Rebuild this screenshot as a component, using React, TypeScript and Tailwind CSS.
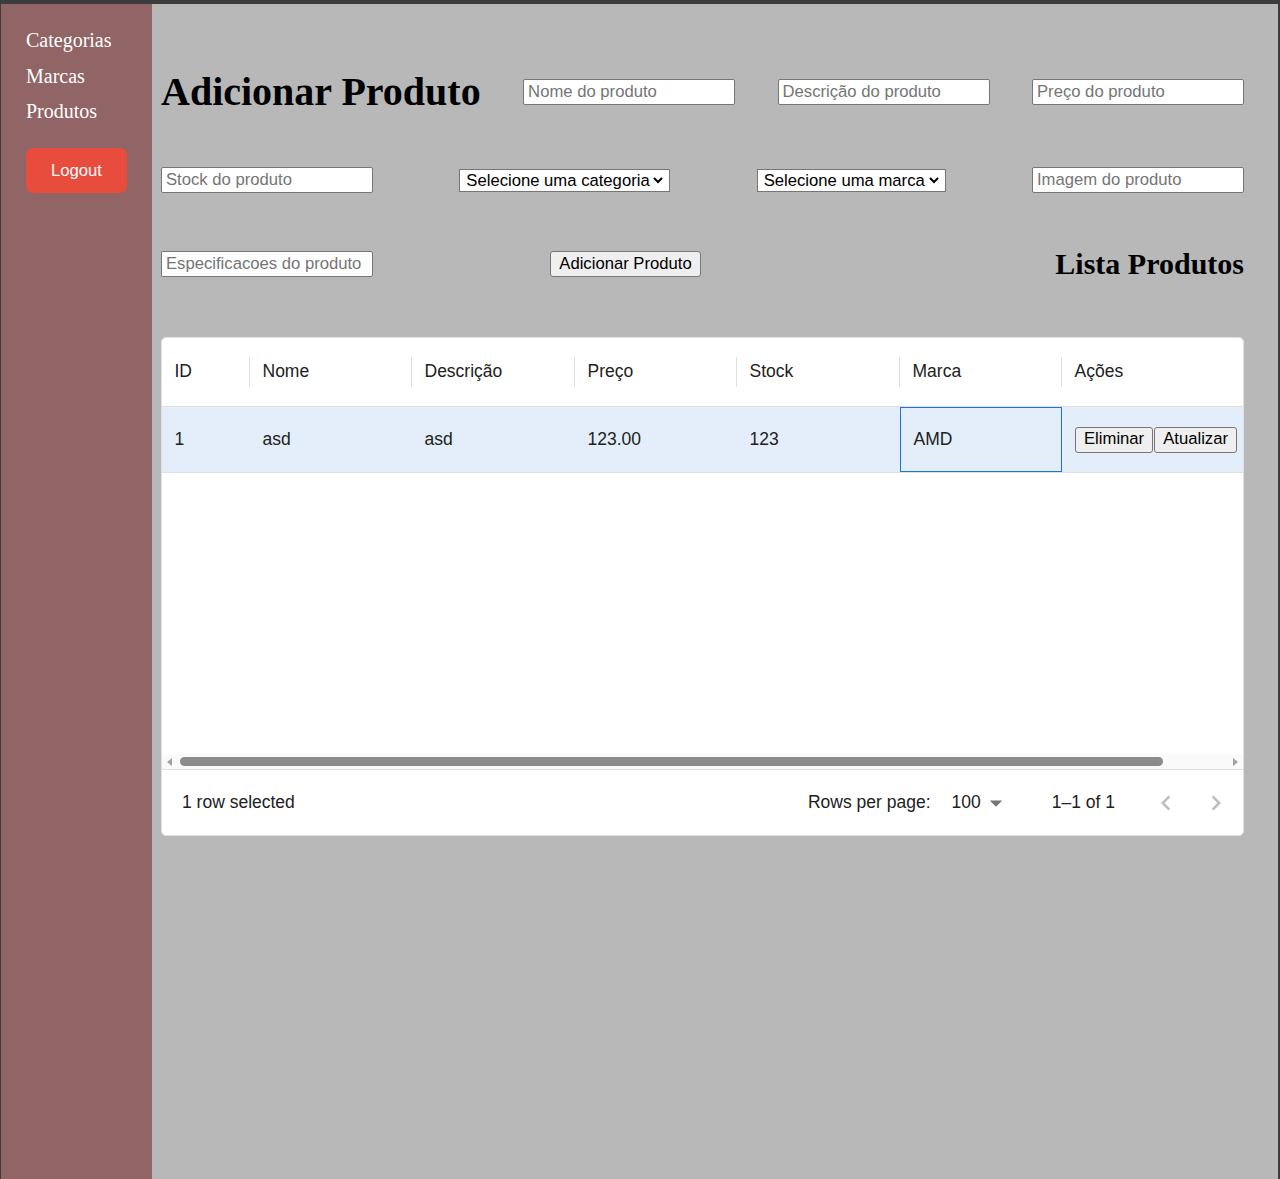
import React from "react";

const sans = { fontFamily: '"Liberation Sans", Arial, sans-serif' };
const serif = { fontFamily: '"Liberation Serif", "Times New Roman", serif' };

const columns = [
  { label: "ID", width: 88 },
  { label: "Nome", width: 162 },
  { label: "Descrição", width: 163 },
  { label: "Preço", width: 162 },
  { label: "Stock", width: 163 },
  { label: "Marca", width: 162 },
  { label: "Ações", width: 275 },
];

function TextInput({ placeholder }: { placeholder: string }) {
  return (
    <input
      placeholder={placeholder}
      className="w-[212px] h-[26px] px-[4px] bg-white border border-[#767676] rounded-[2px] text-[16.67px] text-black placeholder:text-[#757575] outline-none"
      style={sans}
    />
  );
}

function FakeSelect({ label, width }: { label: string; width: number }) {
  return (
    <div
      className="h-[23px] flex items-center justify-between pl-[6px] pr-[5px] bg-white border border-[#767676] text-[16.67px] text-black"
      style={{ ...sans, width }}
    >
      <span>{label}</span>
      <svg width="12" height="12" viewBox="0 0 12 12">
        <path d="M2 4 L6 8 L10 4" fill="none" stroke="#000" strokeWidth="2" />
      </svg>
    </div>
  );
}

function NativeButton({ children, className = "" }: { children: React.ReactNode; className?: string }) {
  return (
    <button
      className={`h-[26px] px-[8px] bg-[#efefef] border border-[#767676] rounded-[3px] text-[16.67px] text-black leading-none ${className}`}
      style={sans}
    >
      {children}
    </button>
  );
}

function ProductTable() {
  const row = ["1", "asd", "asd", "123.00", "123", "AMD"];
  return (
    <div className="mt-[33px] w-[1083px] h-[499px] bg-white border border-[#e0e0e0] rounded-[5px] overflow-hidden flex flex-col text-[17.5px] text-[#212121]" style={sans}>
      {/* header */}
      <div className="flex h-[69px] border-b border-[#e0e0e0] shrink-0">
        {columns.map((c, i) => (
          <div key={c.label} className="flex items-center shrink-0" style={{ width: c.width }}>
            <div className="flex-1 px-[12.5px] pb-[1px]">{c.label}</div>
            {i < columns.length - 1 && <div className="w-px h-[30px] bg-[#e0e0e0]" />}
          </div>
        ))}
      </div>
      {/* row */}
      <div className="flex h-[66px] bg-[#e3eefa] border-b border-[#e0e0e0] shrink-0">
        {row.map((v, i) => (
          <div
            key={i}
            className={`flex items-center px-[12.5px] shrink-0 ${i === 5 ? "border border-[#1976d2] px-[11.5px]" : ""}`}
            style={{ width: columns[i].width }}
          >
            {v}
          </div>
        ))}
        <div className="flex items-center pl-[13px] shrink-0" style={{ width: columns[6].width }}>
          <NativeButton>Eliminar</NativeButton>
          <NativeButton className="ml-px">Atualizar</NativeButton>
        </div>
      </div>
      <div className="flex-1" />
      {/* scrollbar */}
      <div className="h-[15px] flex items-center bg-[#fafafa] shrink-0">
        <svg width="10" height="10" viewBox="0 0 10 10" className="ml-[3px]">
          <path d="M7 1 L2 5 L7 9 Z" fill="#a3a3a3" />
        </svg>
        <div className="ml-[5px] w-[983px] h-[9px] rounded-full bg-[#8c8c8c]" />
        <div className="flex-1" />
        <svg width="10" height="10" viewBox="0 0 10 10" className="mr-[3px]">
          <path d="M3 1 L8 5 L3 9 Z" fill="#a3a3a3" />
        </svg>
      </div>
      {/* footer */}
      <div className="h-[66px] border-t border-[#e0e0e0] flex items-center shrink-0">
        <div className="pl-[20px]">1 row selected</div>
        <div className="flex-1" />
        <div>Rows per page:</div>
        <div className="ml-[21px] flex items-center">
          <span>100</span>
          <svg width="30" height="30" viewBox="0 0 24 24">
            <path d="M7 10l5 5 5-5z" fill="#757575" />
          </svg>
        </div>
        <div className="ml-[41px]">1–1 of 1</div>
        <div className="ml-[26px] flex items-center">
          <div className="w-[50px] h-[50px] flex items-center justify-center">
            <svg width="30" height="30" viewBox="0 0 24 24">
              <path d="M15.41 16.59L10.83 12l4.58-4.59L14 6l-6 6 6 6 1.41-1.41z" fill="#bdbdbd" />
            </svg>
          </div>
          <div className="w-[50px] h-[50px] flex items-center justify-center">
            <svg width="30" height="30" viewBox="0 0 24 24">
              <path d="M8.59 16.59L13.17 12 8.59 7.41 10 6l6 6-6 6-1.41-1.41z" fill="#bdbdbd" />
            </svg>
          </div>
        </div>
        <div className="w-[2px]" />
      </div>
    </div>
  );
}

export default function App() {
  return (
    <div className="min-h-screen flex border-t-4 border-l border-r-2 border-[#3c3c3c] bg-[#b8b8b8]">
      {/* Sidebar */}
      <aside className="w-[151px] shrink-0 bg-[#916565] pt-[19px] pl-[25px]">
        <nav className="flex flex-col text-[20px] text-white leading-[35.5px]" style={serif}>
          <a>Categorias</a>
          <a>Marcas</a>
          <a>Produtos</a>
        </nav>
        <button
          className="mt-[18px] w-[101px] h-[45px] bg-[#e74c3c] rounded-[7px] text-white text-[16.67px]"
          style={sans}
        >
          Logout
        </button>
      </aside>

      {/* Main */}
      <main className="flex-1 pl-[9px] pt-[44px]">
        <div className="w-[1083px]">
          <div className="h-[88px] flex items-center justify-between">
            <h1 className="text-[40px] font-bold text-black leading-none" style={serif}>
              Adicionar Produto
            </h1>
            <TextInput placeholder="Nome do produto" />
            <TextInput placeholder="Descrição do produto" />
            <TextInput placeholder="Preço do produto" />
          </div>
          <div className="h-[88px] flex items-center justify-between">
            <TextInput placeholder="Stock do produto" />
            <FakeSelect label="Selecione uma categoria" width={211} />
            <FakeSelect label="Selecione uma marca" width={189} />
            <TextInput placeholder="Imagem do produto" />
          </div>
          <div className="h-[80px] flex items-center">
            <TextInput placeholder="Especificacoes do produto" />
            <NativeButton className="ml-[177px] w-[151px]">Adicionar Produto</NativeButton>
            <div className="flex-1" />
            <h2 className="text-[30px] font-bold text-black leading-none" style={serif}>
              Lista Produtos
            </h2>
          </div>
          <ProductTable />
        </div>
      </main>
    </div>
  );
}
